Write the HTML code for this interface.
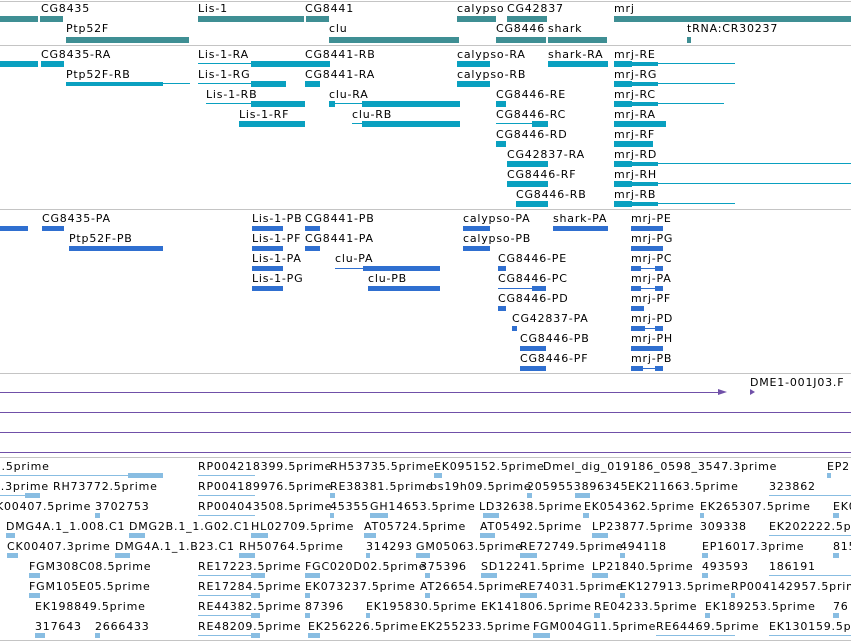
<!DOCTYPE html>
<html><head><meta charset="utf-8"><style>
body{margin:0;width:851px;height:641px;overflow:hidden;background:#fff;position:relative;font-family:"DejaVu Sans","Liberation Sans",sans-serif;}
.l{position:absolute;font-size:11px;line-height:14px;color:#000;white-space:nowrap;letter-spacing:0.8px;margin-top:1px}
.g{position:absolute;height:1px;width:851px;left:0;background:#c4c4c4}
.p{position:absolute;height:1px;left:0;background:#7050a8}
.a{position:absolute;height:6px;background:#3f8f94}
.b{position:absolute;height:6px;background:#0aa0c0}
.bl{position:absolute;height:1px;background:#0aa0c0}
.c{position:absolute;height:6px;background:#2f6fd0}
.cl{position:absolute;height:1px;background:#2f6fd0}
.d{position:absolute;height:6px;background:#88bde2}
.dl{position:absolute;height:1px;background:#88bde2}
</style></head><body>
<div class="g" style="top:1px"></div>
<div class="g" style="top:45px"></div>
<div class="g" style="top:209px"></div>
<div class="g" style="top:373px"></div>
<div class="g" style="top:457px"></div>
<div class="g" style="top:640px"></div>

<!-- track 1 -->
<span class="l" style="left:41px;top:1px">CG8435</span>
<span class="l" style="left:198px;top:1px">Lis-1</span>
<span class="l" style="left:305px;top:1px">CG8441</span>
<span class="l" style="left:457px;top:1px">calypso</span>
<span class="l" style="left:507px;top:1px">CG42837</span>
<span class="l" style="left:614px;top:1px">mrj</span>
<div class="a" style="left:0;width:38px;top:16px"></div>
<div class="a" style="left:40px;width:23px;top:16px"></div>
<div class="a" style="left:198px;width:106px;top:16px"></div>
<div class="a" style="left:306px;width:23px;top:16px"></div>
<div class="a" style="left:457px;width:39px;top:16px"></div>
<div class="a" style="left:507px;width:40px;top:16px"></div>
<div class="a" style="left:614px;width:237px;top:16px"></div>
<span class="l" style="left:66px;top:21px">Ptp52F</span>
<span class="l" style="left:329px;top:21px">clu</span>
<span class="l" style="left:496px;top:21px">CG8446</span>
<span class="l" style="left:548px;top:21px">shark</span>
<span class="l" style="left:687px;top:21px">tRNA:CR30237</span>
<div class="a" style="left:66px;width:123px;top:37px"></div>
<div class="a" style="left:329px;width:130px;top:37px"></div>
<div class="a" style="left:496px;width:50px;top:37px"></div>
<div class="a" style="left:548px;width:59px;top:37px"></div>
<div class="a" style="left:687px;width:4px;top:37px"></div>

<!-- track 2 -->
<span class="l" style="left:41px;top:47px">CG8435-RA</span>
<span class="l" style="left:198px;top:47px">Lis-1-RA</span>
<span class="l" style="left:305px;top:47px">CG8441-RB</span>
<span class="l" style="left:457px;top:47px">calypso-RA</span>
<span class="l" style="left:548px;top:47px">shark-RA</span>
<span class="l" style="left:614px;top:47px">mrj-RE</span>
<div class="b" style="left:0;width:38px;top:61px"></div>
<div class="b" style="left:41px;width:23px;top:61px"></div>
<div class="bl" style="left:198px;width:80px;top:63px"></div>
<div class="b" style="left:251px;width:54px;top:61px"></div>
<div class="b" style="left:305px;width:25px;top:61px"></div>
<div class="b" style="left:457px;width:33px;top:61px"></div>
<div class="b" style="left:548px;width:60px;top:61px"></div>
<div class="b" style="left:614px;width:18px;top:61px"></div><div class="b" style="left:632px;width:26px;top:62px;height:4px"></div>
<div class="bl" style="left:614px;width:121px;top:63px"></div>

<span class="l" style="left:66px;top:67px">Ptp52F-RB</span>
<span class="l" style="left:198px;top:67px">Lis-1-RG</span>
<span class="l" style="left:305px;top:67px">CG8441-RA</span>
<span class="l" style="left:457px;top:67px">calypso-RB</span>
<span class="l" style="left:614px;top:67px">mrj-RG</span>
<div class="b" style="left:66px;width:97px;top:82px;height:4px"></div><div class="bl" style="left:66px;width:124px;top:83px"></div>
<div class="bl" style="left:198px;width:88px;top:83px"></div><div class="b" style="left:251px;width:35px;top:81px"></div>
<div class="b" style="left:305px;width:15px;top:81px"></div>
<div class="b" style="left:457px;width:33px;top:81px"></div>
<div class="b" style="left:614px;width:18px;top:81px"></div><div class="b" style="left:632px;width:26px;top:82px;height:4px"></div><div class="bl" style="left:614px;width:121px;top:83px"></div>

<span class="l" style="left:206px;top:87px">Lis-1-RB</span>
<span class="l" style="left:329px;top:87px">clu-RA</span>
<span class="l" style="left:496px;top:87px">CG8446-RE</span>
<span class="l" style="left:614px;top:87px">mrj-RC</span>
<div class="bl" style="left:206px;width:99px;top:103px"></div><div class="b" style="left:251px;width:54px;top:101px"></div>
<div class="bl" style="left:329px;width:131px;top:103px"></div><div class="b" style="left:329px;width:6px;top:101px"></div><div class="b" style="left:362px;width:98px;top:101px"></div>
<div class="b" style="left:496px;width:10px;top:101px"></div>
<div class="b" style="left:614px;width:18px;top:101px"></div><div class="b" style="left:632px;width:26px;top:102px;height:4px"></div><div class="bl" style="left:614px;width:110px;top:103px"></div>

<span class="l" style="left:239px;top:107px">Lis-1-RF</span>
<span class="l" style="left:352px;top:107px">clu-RB</span>
<span class="l" style="left:496px;top:107px">CG8446-RC</span>
<span class="l" style="left:614px;top:107px">mrj-RA</span>
<div class="b" style="left:239px;width:66px;top:121px"></div>
<div class="bl" style="left:352px;width:108px;top:123px"></div><div class="b" style="left:362px;width:98px;top:121px"></div><div class="b" style="left:430px;width:30px;top:121px"></div>
<div class="bl" style="left:496px;width:52px;top:123px"></div><div class="b" style="left:532px;width:16px;top:121px"></div>
<div class="b" style="left:614px;width:52px;top:121px"></div>

<span class="l" style="left:496px;top:127px">CG8446-RD</span>
<span class="l" style="left:614px;top:127px">mrj-RF</span>
<div class="b" style="left:496px;width:10px;top:141px"></div>
<div class="b" style="left:614px;width:39px;top:141px"></div>

<span class="l" style="left:507px;top:147px">CG42837-RA</span>
<span class="l" style="left:614px;top:147px">mrj-RD</span>
<div class="b" style="left:507px;width:41px;top:161px"></div>
<div class="b" style="left:614px;width:18px;top:161px"></div><div class="b" style="left:632px;width:26px;top:162px;height:4px"></div><div class="bl" style="left:614px;width:237px;top:163px"></div>

<span class="l" style="left:507px;top:167px">CG8446-RF</span>
<span class="l" style="left:614px;top:167px">mrj-RH</span>
<div class="b" style="left:507px;width:41px;top:181px"></div>
<div class="b" style="left:614px;width:18px;top:181px"></div><div class="b" style="left:632px;width:26px;top:182px;height:4px"></div><div class="bl" style="left:614px;width:237px;top:183px"></div>

<span class="l" style="left:516px;top:187px">CG8446-RB</span>
<span class="l" style="left:614px;top:187px">mrj-RB</span>
<div class="b" style="left:516px;width:32px;top:201px"></div>
<div class="b" style="left:614px;width:18px;top:201px"></div><div class="b" style="left:632px;width:26px;top:202px;height:4px"></div><div class="bl" style="left:614px;width:121px;top:203px"></div>

<!-- track 3 -->
<span class="l" style="left:42px;top:211px">CG8435-PA</span>
<span class="l" style="left:252px;top:211px">Lis-1-PB</span>
<span class="l" style="left:305px;top:211px">CG8441-PB</span>
<span class="l" style="left:463px;top:211px">calypso-PA</span>
<span class="l" style="left:553px;top:211px">shark-PA</span>
<span class="l" style="left:631px;top:211px">mrj-PE</span>
<div class="c" style="left:0;width:28px;top:226px;height:5px"></div>
<div class="c" style="left:42px;width:22px;top:226px;height:5px"></div>
<div class="c" style="left:252px;width:31px;top:226px;height:5px"></div>
<div class="c" style="left:305px;width:15px;top:226px;height:5px"></div>
<div class="c" style="left:463px;width:27px;top:226px;height:5px"></div>
<div class="c" style="left:553px;width:55px;top:226px;height:5px"></div>
<div class="c" style="left:631px;width:32px;top:226px;height:5px"></div>

<span class="l" style="left:69px;top:231px">Ptp52F-PB</span>
<span class="l" style="left:252px;top:231px">Lis-1-PF</span>
<span class="l" style="left:305px;top:231px">CG8441-PA</span>
<span class="l" style="left:463px;top:231px">calypso-PB</span>
<span class="l" style="left:631px;top:231px">mrj-PG</span>
<div class="c" style="left:69px;width:94px;top:246px;height:5px"></div>
<div class="c" style="left:252px;width:31px;top:246px;height:5px"></div>
<div class="c" style="left:305px;width:15px;top:246px;height:5px"></div>
<div class="c" style="left:463px;width:27px;top:246px;height:5px"></div>
<div class="c" style="left:631px;width:32px;top:246px;height:5px"></div>

<span class="l" style="left:252px;top:251px">Lis-1-PA</span>
<span class="l" style="left:335px;top:251px">clu-PA</span>
<span class="l" style="left:498px;top:251px">CG8446-PE</span>
<span class="l" style="left:631px;top:251px">mrj-PC</span>
<div class="c" style="left:252px;width:31px;top:266px;height:5px"></div>
<div class="cl" style="left:335px;width:95px;top:268px"></div><div class="c" style="left:363px;width:67px;top:266px;height:5px"></div>
<div class="c" style="left:430px;width:10px;top:266px;height:5px"></div>
<div class="c" style="left:498px;width:8px;top:266px;height:5px"></div>
<div class="c" style="left:631px;width:10px;top:266px;height:5px"></div><div class="cl" style="left:631px;width:32px;top:268px"></div><div class="c" style="left:655px;width:8px;top:266px;height:5px"></div>

<span class="l" style="left:252px;top:271px">Lis-1-PG</span>
<span class="l" style="left:368px;top:271px">clu-PB</span>
<span class="l" style="left:498px;top:271px">CG8446-PC</span>
<span class="l" style="left:631px;top:271px">mrj-PA</span>
<div class="c" style="left:252px;width:31px;top:286px;height:5px"></div>
<div class="c" style="left:368px;width:62px;top:286px;height:5px"></div>
<div class="c" style="left:430px;width:10px;top:286px;height:5px"></div>
<div class="cl" style="left:498px;width:48px;top:288px"></div><div class="c" style="left:532px;width:14px;top:286px;height:5px"></div>
<div class="c" style="left:631px;width:10px;top:286px;height:5px"></div><div class="cl" style="left:631px;width:32px;top:288px"></div><div class="c" style="left:655px;width:8px;top:286px;height:5px"></div>

<span class="l" style="left:498px;top:291px">CG8446-PD</span>
<span class="l" style="left:631px;top:291px">mrj-PF</span>
<div class="c" style="left:498px;width:8px;top:306px;height:5px"></div>
<div class="c" style="left:631px;width:13px;top:306px;height:5px"></div>

<span class="l" style="left:512px;top:311px">CG42837-PA</span>
<span class="l" style="left:631px;top:311px">mrj-PD</span>
<div class="c" style="left:512px;width:5px;top:326px;height:5px"></div>
<div class="c" style="left:631px;width:14px;top:326px;height:5px"></div><div class="cl" style="left:631px;width:32px;top:328px"></div><div class="c" style="left:655px;width:8px;top:326px;height:5px"></div>

<span class="l" style="left:520px;top:331px">CG8446-PB</span>
<span class="l" style="left:631px;top:331px">mrj-PH</span>
<div class="c" style="left:520px;width:26px;top:346px;height:5px"></div>
<div class="c" style="left:631px;width:32px;top:346px;height:5px"></div>

<span class="l" style="left:520px;top:351px">CG8446-PF</span>
<span class="l" style="left:631px;top:351px">mrj-PB</span>
<div class="c" style="left:520px;width:26px;top:366px;height:5px"></div>
<div class="c" style="left:631px;width:12px;top:366px;height:5px"></div><div class="cl" style="left:631px;width:32px;top:368px"></div><div class="c" style="left:655px;width:8px;top:366px;height:5px"></div>

<!-- purple track -->
<span class="l" style="left:750px;top:375px">DME1-001J03.F</span>
<div class="p" style="top:392px;width:720px"></div>
<div style="position:absolute;left:718px;top:389px;width:0;height:0;border-left:9px solid #7050a8;border-top:3px solid transparent;border-bottom:3px solid transparent"></div>
<div style="position:absolute;left:750px;top:389px;width:0;height:0;border-left:5px solid #7050a8;border-top:3px solid transparent;border-bottom:3px solid transparent"></div>
<div class="p" style="top:412px;width:851px"></div>
<div class="p" style="top:432px;width:851px"></div>
<div class="p" style="top:452px;width:851px"></div>

<!-- bottom track -->
<span class="l" style="left:-6px;top:459px">a.5prime</span>
<span class="l" style="left:198px;top:459px">RP004218399.5prime</span>
<span class="l" style="left:330px;top:459px">RH53735.5prime</span>
<span class="l" style="left:434px;top:459px">EK095152.5prime</span>
<span class="l" style="left:543px;top:459px">Dmel_dig_019186_0598_3547.3prime</span>
<span class="l" style="left:827px;top:459px">EP2</span>
<div class="dl" style="left:0;width:163px;top:475px"></div><div class="d" style="left:128px;width:35px;top:473px;height:5px"></div>
<div class="dl" style="left:198px;width:57px;top:475px"></div>
<div class="d" style="left:434px;width:8px;top:473px;height:5px"></div>
<div class="d" style="left:827px;width:4px;top:473px;height:5px"></div>

<span class="l" style="left:-7px;top:479px">0.3prime</span>
<span class="l" style="left:53px;top:479px">RH73772.5prime</span>
<span class="l" style="left:198px;top:479px">RP004189976.5prime</span>
<span class="l" style="left:330px;top:479px">RE38381.5prime</span>
<span class="l" style="left:430px;top:479px">bs19h09.5prime</span>
<span class="l" style="left:527px;top:479px">2059553896345</span>
<span class="l" style="left:628px;top:479px">EK211663.5prime</span>
<span class="l" style="left:769px;top:479px">323862</span>
<div class="dl" style="left:0;width:40px;top:495px"></div><div class="d" style="left:25px;width:15px;top:493px;height:5px"></div>
<div class="dl" style="left:198px;width:57px;top:495px"></div>
<div class="d" style="left:330px;width:5px;top:493px;height:5px"></div>
<div class="d" style="left:527px;width:5px;top:493px;height:5px"></div>
<div class="d" style="left:575px;width:15px;top:493px;height:5px"></div>
<div class="dl" style="left:769px;width:82px;top:495px"></div>

<span class="l" style="left:-4px;top:499px">K00407.5prime</span>
<span class="l" style="left:95px;top:499px">3702753</span>
<span class="l" style="left:198px;top:499px">RP004043508.5prime</span>
<span class="l" style="left:330px;top:499px">45355</span>
<span class="l" style="left:370px;top:499px">GH14653.5prime</span>
<span class="l" style="left:479px;top:499px">LD32638.5prime</span>
<span class="l" style="left:584px;top:499px">EK054362.5prime</span>
<span class="l" style="left:700px;top:499px">EK265307.5prime</span>
<span class="l" style="left:833px;top:499px">EK0</span>
<div class="dl" style="left:198px;width:57px;top:515px"></div>
<div class="d" style="left:95px;width:5px;top:513px;height:5px"></div>
<div class="d" style="left:330px;width:4px;top:513px;height:5px"></div>
<div class="d" style="left:370px;width:18px;top:513px;height:5px"></div>
<div class="d" style="left:483px;width:16px;top:513px;height:5px"></div>
<div class="d" style="left:583px;width:6px;top:513px;height:5px"></div>
<div class="d" style="left:700px;width:4px;top:513px;height:5px"></div>
<div class="d" style="left:833px;width:6px;top:513px;height:5px"></div>

<span class="l" style="left:6px;top:519px">DMG4A.1_1.008.C1</span>
<span class="l" style="left:129px;top:519px">DMG2B.1_1.G02.C1</span>
<span class="l" style="left:251px;top:519px">HL02709.5prime</span>
<span class="l" style="left:364px;top:519px">AT05724.5prime</span>
<span class="l" style="left:480px;top:519px">AT05492.5prime</span>
<span class="l" style="left:592px;top:519px">LP23877.5prime</span>
<span class="l" style="left:700px;top:519px">309338</span>
<span class="l" style="left:769px;top:519px">EK202222.5prime</span>
<div class="d" style="left:6px;width:9px;top:533px;height:5px"></div>
<div class="d" style="left:129px;width:16px;top:533px;height:5px"></div>
<div class="d" style="left:251px;width:17px;top:533px;height:5px"></div>
<div class="d" style="left:364px;width:12px;top:533px;height:5px"></div>
<div class="d" style="left:480px;width:15px;top:533px;height:5px"></div>
<div class="d" style="left:592px;width:16px;top:533px;height:5px"></div>
<div class="dl" style="left:769px;width:82px;top:535px"></div>

<span class="l" style="left:7px;top:539px">CK00407.3prime</span>
<span class="l" style="left:115px;top:539px">DMG4A.1_1.B23.C1</span>
<span class="l" style="left:239px;top:539px">RH50764.5prime</span>
<span class="l" style="left:366px;top:539px">314293</span>
<span class="l" style="left:416px;top:539px">GM05063.5prime</span>
<span class="l" style="left:520px;top:539px">RE72749.5prime</span>
<span class="l" style="left:620px;top:539px">494118</span>
<span class="l" style="left:702px;top:539px">EP16017.3prime</span>
<span class="l" style="left:833px;top:539px">815</span>
<div class="d" style="left:7px;width:11px;top:553px;height:5px"></div>
<div class="d" style="left:115px;width:15px;top:553px;height:5px"></div>
<div class="d" style="left:239px;width:16px;top:553px;height:5px"></div>
<div class="d" style="left:366px;width:4px;top:553px;height:5px"></div>
<div class="d" style="left:416px;width:14px;top:553px;height:5px"></div>
<div class="d" style="left:520px;width:17px;top:553px;height:5px"></div>
<div class="d" style="left:620px;width:5px;top:553px;height:5px"></div>
<div class="d" style="left:702px;width:6px;top:553px;height:5px"></div>
<div class="d" style="left:833px;width:6px;top:553px;height:5px"></div>

<span class="l" style="left:29px;top:559px">FGM308C08.5prime</span>
<span class="l" style="left:198px;top:559px">RE17223.5prime</span>
<span class="l" style="left:305px;top:559px">FGC020D02.5prime</span>
<span class="l" style="left:420px;top:559px">375396</span>
<span class="l" style="left:481px;top:559px">SD12241.5prime</span>
<span class="l" style="left:592px;top:559px">LP21840.5prime</span>
<span class="l" style="left:702px;top:559px">493593</span>
<span class="l" style="left:769px;top:559px">186191</span>
<div class="d" style="left:29px;width:11px;top:573px;height:5px"></div>
<div class="dl" style="left:198px;width:67px;top:575px"></div><div class="d" style="left:251px;width:14px;top:573px;height:5px"></div>
<div class="d" style="left:305px;width:15px;top:573px;height:5px"></div>
<div class="d" style="left:425px;width:5px;top:573px;height:5px"></div>
<div class="d" style="left:481px;width:16px;top:573px;height:5px"></div>
<div class="d" style="left:592px;width:16px;top:573px;height:5px"></div>
<div class="d" style="left:702px;width:6px;top:573px;height:5px"></div>
<div class="dl" style="left:769px;width:82px;top:575px"></div>

<span class="l" style="left:29px;top:579px">FGM105E05.5prime</span>
<span class="l" style="left:198px;top:579px">RE17284.5prime</span>
<span class="l" style="left:305px;top:579px">EK073237.5prime</span>
<span class="l" style="left:420px;top:579px">AT26654.5prime</span>
<span class="l" style="left:520px;top:579px">RE74031.5prime</span>
<span class="l" style="left:620px;top:579px">EK127913.5prime</span>
<span class="l" style="left:731px;top:579px">RP004142957.5prime</span>
<div class="d" style="left:29px;width:11px;top:593px;height:5px"></div>
<div class="dl" style="left:198px;width:62px;top:595px"></div><div class="d" style="left:251px;width:9px;top:593px;height:5px"></div>
<div class="d" style="left:305px;width:5px;top:593px;height:5px"></div>
<div class="d" style="left:425px;width:5px;top:593px;height:5px"></div>
<div class="d" style="left:520px;width:17px;top:593px;height:5px"></div>
<div class="d" style="left:620px;width:5px;top:593px;height:5px"></div>
<div class="d" style="left:731px;width:4px;top:593px;height:5px"></div>

<span class="l" style="left:35px;top:599px">EK198849.5prime</span>
<span class="l" style="left:198px;top:599px">RE44382.5prime</span>
<span class="l" style="left:305px;top:599px">87396</span>
<span class="l" style="left:366px;top:599px">EK195830.5prime</span>
<span class="l" style="left:481px;top:599px">EK141806.5prime</span>
<span class="l" style="left:594px;top:599px">RE04233.5prime</span>
<span class="l" style="left:705px;top:599px">EK189253.5prime</span>
<span class="l" style="left:833px;top:599px">76</span>
<div class="dl" style="left:198px;width:62px;top:615px"></div><div class="d" style="left:251px;width:9px;top:613px;height:5px"></div>
<div class="d" style="left:305px;width:5px;top:613px;height:5px"></div>
<div class="d" style="left:366px;width:4px;top:613px;height:5px"></div>
<div class="d" style="left:594px;width:6px;top:613px;height:5px"></div>
<div class="d" style="left:705px;width:5px;top:613px;height:5px"></div>
<div class="d" style="left:833px;width:6px;top:613px;height:5px"></div>

<span class="l" style="left:35px;top:619px">317643</span>
<span class="l" style="left:95px;top:619px">2666433</span>
<span class="l" style="left:198px;top:619px">RE48209.5prime</span>
<span class="l" style="left:308px;top:619px">EK256226.5prime</span>
<span class="l" style="left:420px;top:619px">EK255233.5prime</span>
<span class="l" style="left:533px;top:619px">FGM004G11.5prime</span>
<span class="l" style="left:656px;top:619px">RE64469.5prime</span>
<span class="l" style="left:769px;top:619px">EK130159.5prime</span>
<div class="d" style="left:35px;width:10px;top:633px;height:5px"></div>
<div class="d" style="left:95px;width:5px;top:633px;height:5px"></div>
<div class="dl" style="left:198px;width:62px;top:635px"></div><div class="d" style="left:251px;width:9px;top:633px;height:5px"></div>
<div class="d" style="left:308px;width:12px;top:633px;height:5px"></div>
<div class="d" style="left:533px;width:17px;top:633px;height:5px"></div>
<div class="dl" style="left:656px;width:79px;top:635px"></div>
<div class="dl" style="left:769px;width:82px;top:635px"></div>
</body></html>
